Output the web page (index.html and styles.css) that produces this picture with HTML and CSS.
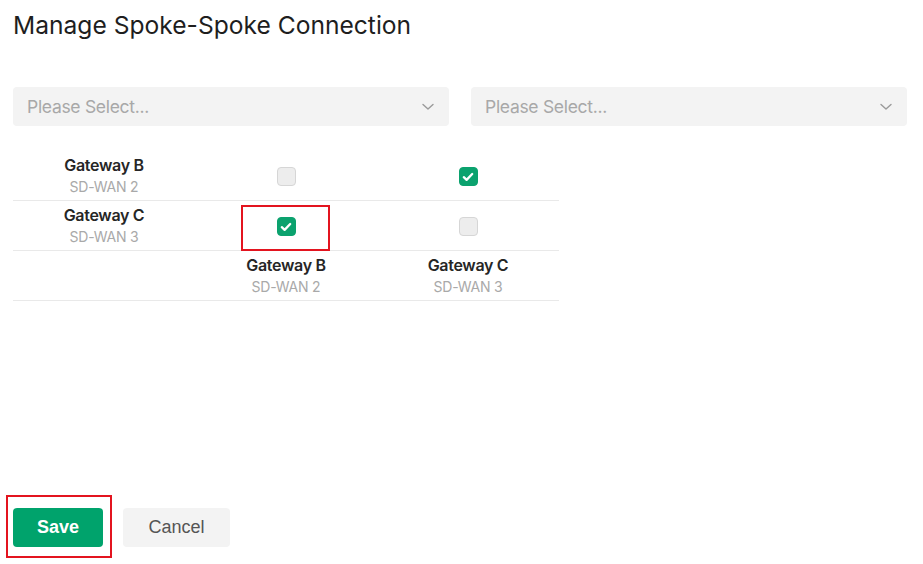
FILE: index.html
```html
<!DOCTYPE html>
<html>
<head>
<meta charset="utf-8">
<link rel="stylesheet" href="styles.css">
</head>
<body>
<div class="page">
  <h1 class="title">Manage Spoke-Spoke Connection</h1>
  <div class="selects">
    <div class="select"><span class="placeholder">Please Select...</span>
      <svg class="chev" width="12" height="8" viewBox="0 0 12 8"><path d="M1 1.5 L6 6 L11 1.5" fill="none" stroke="#9a9a9a" stroke-width="1.4" stroke-linecap="round" stroke-linejoin="round"/></svg>
    </div>
    <div class="select"><span class="placeholder">Please Select...</span>
      <svg class="chev" width="12" height="8" viewBox="0 0 12 8"><path d="M1 1.5 L6 6 L11 1.5" fill="none" stroke="#9a9a9a" stroke-width="1.4" stroke-linecap="round" stroke-linejoin="round"/></svg>
    </div>
  </div>
  <div class="matrix">
    <div class="row">
      <div class="cell label"><div class="name">Gateway B</div><div class="sub">SD-WAN 2</div></div>
      <div class="cell"><span class="cb"></span></div>
      <div class="cell"><span class="cb checked"><svg width="12" height="10" viewBox="0 0 12 10"><path d="M1.8 5.2 L4.6 7.9 L10.2 2" fill="none" stroke="#fff" stroke-width="2.3" stroke-linecap="round" stroke-linejoin="round"/></svg></span></div>
    </div>
    <div class="row">
      <div class="cell label"><div class="name">Gateway C</div><div class="sub">SD-WAN 3</div></div>
      <div class="cell"><span class="cb checked"><svg width="12" height="10" viewBox="0 0 12 10"><path d="M1.8 5.2 L4.6 7.9 L10.2 2" fill="none" stroke="#fff" stroke-width="2.3" stroke-linecap="round" stroke-linejoin="round"/></svg></span><span class="mark mark-cell"></span></div>
      <div class="cell"><span class="cb"></span></div>
    </div>
    <div class="row">
      <div class="cell label"></div>
      <div class="cell label"><div class="name">Gateway B</div><div class="sub">SD-WAN 2</div></div>
      <div class="cell label"><div class="name">Gateway C</div><div class="sub">SD-WAN 3</div></div>
    </div>
  </div>
  <div class="spacer"></div>
  <div class="actions">
    <div class="save-wrap"><button class="btn save">Save</button><span class="mark mark-save"></span></div>
    <button class="btn cancel">Cancel</button>
  </div>
</div>
</body>
</html>
```
FILE: styles.css
```css
html, body {
  margin: 0;
  padding: 0;
  background: #fff;
}
body {
  font-family: Inter, "Noto Sans", sans-serif;
  color: #222;
  width: 923px;
  height: 564px;
  overflow: hidden;
}
.page {
  padding: 0 16px 0 13px;
  height: 564px;
  box-sizing: border-box;
  display: flex;
  flex-direction: column;
}
.title {
  margin: 9px 0 0 0;
  font-size: 24.6px;
  line-height: 32px;
  font-weight: 400;
  color: #1e1e1e;
  letter-spacing: 0;
}
.selects {
  display: flex;
  gap: 22px;
  margin-top: 46px;
}
.select {
  width: 436px;
  height: 39px;
  background: #f3f3f3;
  border-radius: 4px;
  display: flex;
  align-items: center;
  justify-content: space-between;
  padding: 0 15px 0 14px;
  box-sizing: border-box;
}
.placeholder {
  font-size: 17.5px;
  color: #a8a8a8;
  letter-spacing: -0.3px;
}
.chev {
  display: block;
}
.matrix {
  margin-top: 25px;
  width: 546px;
}
.row {
  display: grid;
  grid-template-columns: 182px 182px 182px;
  height: 50px;
  border-bottom: 1px solid #e9e9e9;
  box-sizing: border-box;
}
.cell {
  display: flex;
  flex-direction: column;
  align-items: center;
  justify-content: center;
  position: relative;
}
.cell.label {
  gap: 2px;
}
.name {
  font-size: 16px;
  font-weight: 600;
  color: #262626;
  line-height: 20px;
  letter-spacing: -0.3px;
}
.sub {
  font-size: 14px;
  color: #a9a9a9;
  line-height: 19px;
  letter-spacing: -0.2px;
}
.cb {
  width: 19px;
  height: 19px;
  border-radius: 4px;
  background: #ededed;
  border: 1px solid #d6d6d6;
  box-sizing: border-box;
  display: flex;
  align-items: center;
  justify-content: center;
  margin-top: 2px;
}
.cb.checked {
  background: #0ba26e;
  border-color: #0ba26e;
}
.mark {
  position: absolute;
  border: 2px solid #e3141f;
  box-sizing: border-box;
  pointer-events: none;
}
.mark-cell {
  left: 46px;
  top: 4px;
  width: 89px;
  height: 46px;
}
.spacer {
  flex: 1;
}
.actions {
  display: flex;
  gap: 20px;
  margin-bottom: 17px;
  align-items: center;
}
.save-wrap {
  position: relative;
}
.btn {
  height: 39px;
  border: none;
  border-radius: 4px;
  font-family: "Liberation Sans", Arial, sans-serif;
  font-size: 18px;
  padding: 0;
  display: block;
}
.save {
  width: 90px;
  background: #00a36c;
  color: #fff;
  font-weight: 700;
}
.cancel {
  width: 107px;
  background: #f3f3f3;
  color: #555;
}
.mark-save {
  left: -7px;
  top: -13px;
  width: 106px;
  height: 63px;
}
```
